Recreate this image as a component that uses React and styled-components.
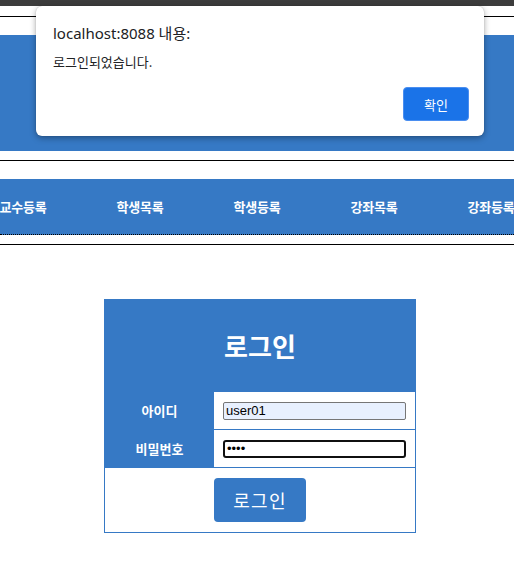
import styled, { createGlobalStyle } from "styled-components";

const GlobalStyle = createGlobalStyle`
  html, body {
    margin: 0;
    padding: 0;
    background: #ffffff;
    overflow: hidden;
    font-family: "Noto Sans CJK KR", "Noto Sans", sans-serif;
  }
`;

const BLUE = "#3679c5";

const menus = ["교수목록", "교수등록", "학생목록", "학생등록", "강좌목록", "강좌등록", "로그아웃"];

export default function App() {
  return (
    <Page>
      <GlobalStyle />
      <Chrome />
      <Header>
        <Rule />
        <Banner />
        <Rule />
        <Nav>
          {menus.map((m) => (
            <NavItem key={m}>{m}</NavItem>
          ))}
        </Nav>
        <Rule />
      </Header>

      <LoginWrap>
        <LoginBox>
          <LoginTitle>로그인</LoginTitle>
          <Row>
            <Label>아이디</Label>
            <Field>
              <Input type="text" defaultValue="user01" $filled />
            </Field>
          </Row>
          <Row>
            <Label>비밀번호</Label>
            <Field>
              <Input type="password" defaultValue="1234" $focus />
            </Field>
          </Row>
          <ButtonRow>
            <LoginButton>로그인</LoginButton>
          </ButtonRow>
        </LoginBox>
      </LoginWrap>

      <Dialog>
        <DialogTitle>localhost:8088 내용:</DialogTitle>
        <DialogText>로그인되었습니다.</DialogText>
        <DialogActions>
          <OkButton>확인</OkButton>
        </DialogActions>
      </Dialog>
    </Page>
  );
}

const Page = styled.div`
  position: relative;
  width: 514px;
  height: 565px;
  overflow: hidden;
`;

const Chrome = styled.div`
  height: 6px;
  background: #3c3c3c;
`;

const Header = styled.div`
  display: flex;
  flex-direction: column;
  padding-top: 10px;
`;

const Rule = styled.div`
  height: 1px;
  background: #000000;
`;

const Banner = styled.div`
  height: 116px;
  margin: 18px 0 9px;
  background: ${BLUE};
`;

const Nav = styled.div`
  display: flex;
  justify-content: center;
  align-items: center;
  height: 55px;
  margin: 18px 0 9px;
  background: ${BLUE};
  border-bottom: 1px dotted #000000;
`;

const NavItem = styled.div`
  flex: 0 0 117px;
  text-align: center;
  color: #ffffff;
  font-size: 13px;
  font-weight: 700;
  letter-spacing: -0.2px;
`;

const LoginWrap = styled.div`
  display: flex;
  justify-content: center;
  padding: 54px 0 0 6px;
`;

const LoginBox = styled.div`
  width: 310px;
  border: 1px solid ${BLUE};
  display: flex;
  flex-direction: column;
`;

const LoginTitle = styled.div`
  height: 90px;
  display: flex;
  align-items: center;
  justify-content: center;
  background: ${BLUE};
  color: #ffffff;
  font-size: 26px;
  font-weight: 700;
  padding-bottom: 2px;
`;

const Row = styled.div`
  display: flex;
  height: 37px;
  border-bottom: 1px solid ${BLUE};
`;

const Label = styled.div`
  width: 109px;
  display: flex;
  align-items: center;
  justify-content: center;
  background: ${BLUE};
  color: #ffffff;
  font-size: 13px;
  font-weight: 700;
`;

const Field = styled.div`
  flex: 1;
  display: flex;
  align-items: center;
  padding-left: 9px;
`;

const Input = styled.input`
  box-sizing: border-box;
  width: 183px;
  height: 18px;
  padding: 0 2px;
  font-family: "Liberation Sans", Arial, sans-serif;
  font-size: 13px;
  color: #000000;
  outline: none;
  border: ${(p) => (p.$focus ? "2px solid #101010" : "1px solid #767676")};
  background: ${(p) => (p.$filled ? "#e8f0fe" : "#ffffff")};
  border-radius: ${(p) => (p.$focus ? "3px" : "2px")};
`;

const ButtonRow = styled.div`
  height: 64px;
  display: flex;
  align-items: center;
  justify-content: center;
`;

const LoginButton = styled.button`
  width: 92px;
  height: 44px;
  border: none;
  border-radius: 4px;
  background: ${BLUE};
  color: #ffffff;
  font-family: "Noto Sans CJK KR", sans-serif;
  font-size: 18px;
  letter-spacing: 1.2px;
`;

const Dialog = styled.div`
  position: absolute;
  top: 6px;
  left: 36px;
  width: 448px;
  height: 130px;
  box-sizing: border-box;
  padding: 17px 15px 15px 17px;
  background: #ffffff;
  border-radius: 6px;
  box-shadow: 0 2px 6px rgba(0, 0, 0, 0.35), 0 0 1px rgba(0, 0, 0, 0.3);
  display: flex;
  flex-direction: column;
`;

const DialogTitle = styled.div`
  font-family: "Noto Sans", "Noto Sans CJK KR", sans-serif;
  font-size: 15px;
  color: #202124;
  line-height: 20px;
`;

const DialogText = styled.div`
  margin-top: 10px;
  font-size: 13px;
  color: #202124;
  line-height: 18px;
`;

const DialogActions = styled.div`
  margin-top: auto;
  display: flex;
  justify-content: flex-end;
`;

const OkButton = styled.button`
  width: 66px;
  height: 34px;
  border: 1px solid #4a8ef0;
  border-radius: 4px;
  background: #1a73e8;
  color: #ffffff;
  font-family: "Noto Sans CJK KR", sans-serif;
  font-size: 13px;
`;
